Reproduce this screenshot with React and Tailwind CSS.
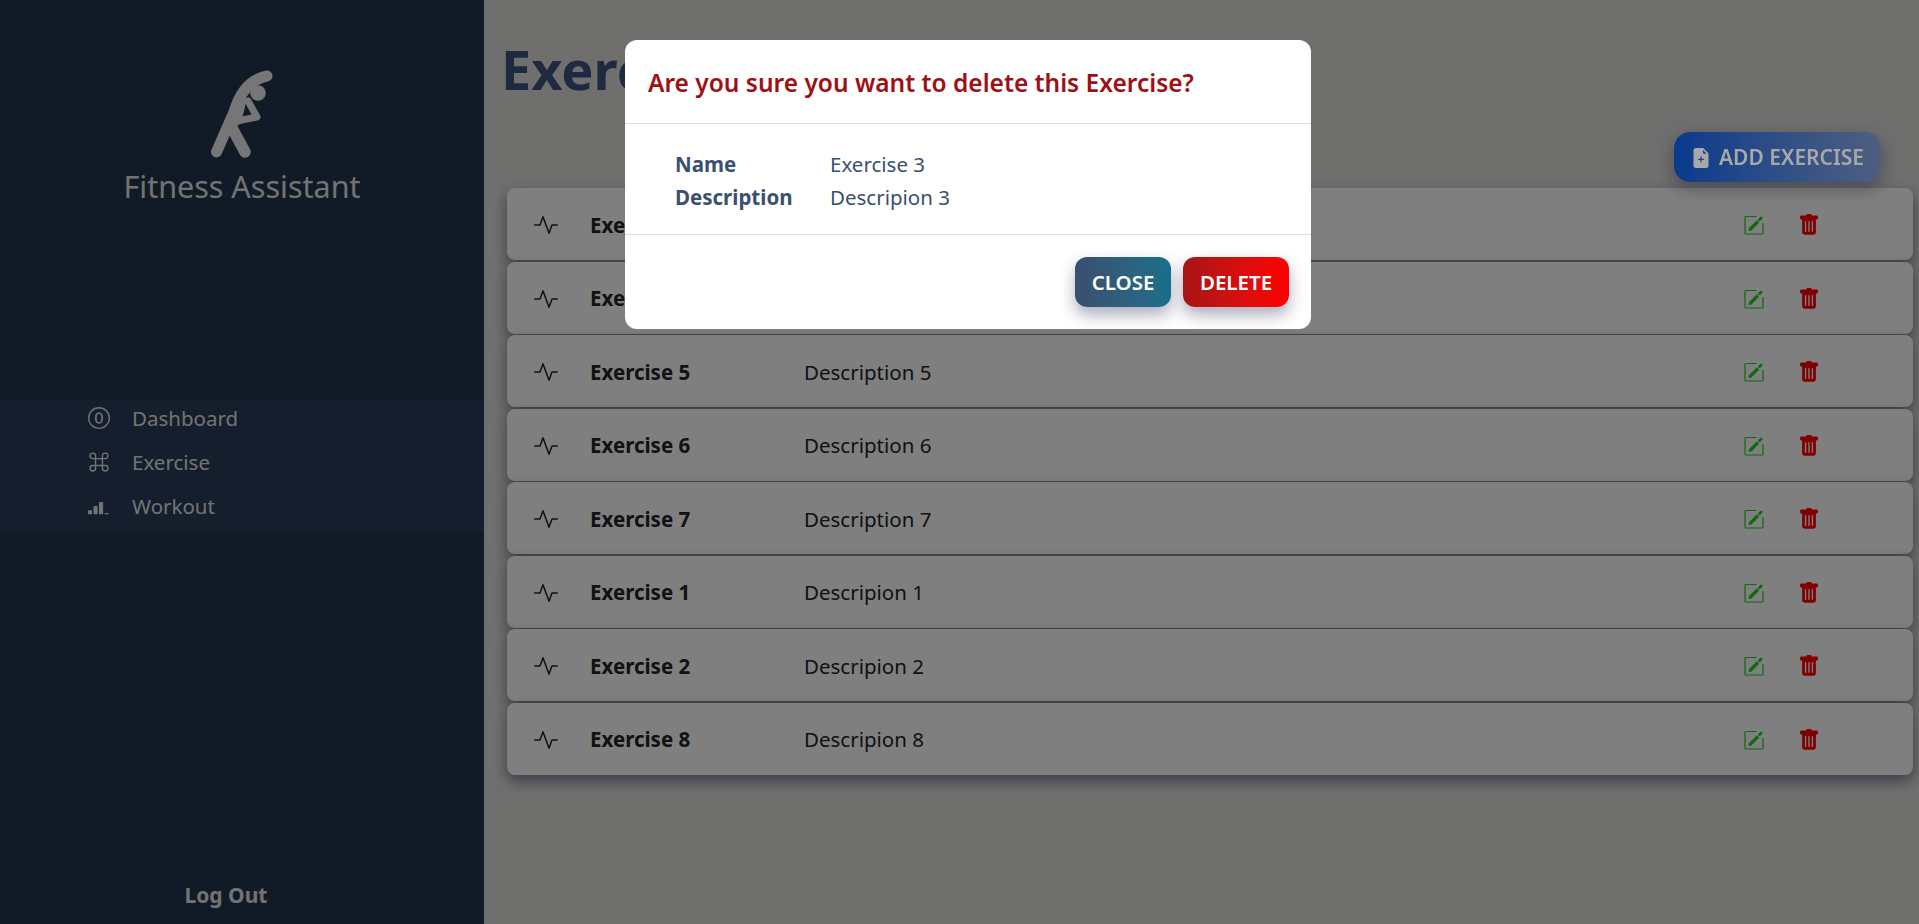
import React from "react";
import { Bs0Circle, BsCommand, BsReception3, BsActivity, BsTrashFill, BsFileEarmarkPlusFill } from "react-icons/bs";

const exercises = [
    { name: "Exercise 3", description: "Descripion 3" },
    { name: "Exercise 4", description: "Descripion 4" },
    { name: "Exercise 5", description: "Description 5" },
    { name: "Exercise 6", description: "Description 6" },
    { name: "Exercise 7", description: "Description 7" },
    { name: "Exercise 1", description: "Descripion 1" },
    { name: "Exercise 2", description: "Descripion 2" },
    { name: "Exercise 8", description: "Descripion 8" },
];

const navItems = [
    { label: "Dashboard", Icon: Bs0Circle },
    { label: "Exercise", Icon: BsCommand },
    { label: "Workout", Icon: BsReception3 },
];

function Logo() {
    return (
        <svg width="65" height="92" viewBox="0 0 65 92" fill="none" className="text-[#ececec]">
            <circle cx="48" cy="23" r="7.8" fill="currentColor" />
            <path d="M6.5 82 L24 42 C30 22 41 9 57 6" stroke="currentColor" strokeWidth="11" strokeLinecap="round" />
            <path d="M21 56 L35 82" stroke="currentColor" strokeWidth="11.5" strokeLinecap="round" />
            <path d="M38 31 L47 47 L27 51" stroke="currentColor" strokeWidth="7" strokeLinecap="round" strokeLinejoin="round" />
            <path d="M24 36 L37 28 L34 41 L31 53 L16 64 Z" fill="currentColor" />
        </svg>
    );
}

function EditIcon() {
    return (
        <svg width="20" height="20" viewBox="0 0 20 20" fill="none" className="shrink-0 text-[#1cd41c]">
            <path d="M12.5 1.5H2a1 1 0 0 0-1 1V18a1 1 0 0 0 1 1h16a1 1 0 0 0 1-1V8" stroke="currentColor" strokeWidth="1.2" />
            <path d="M6 14.5 L14 6.5" stroke="currentColor" strokeWidth="3.2" />
            <path d="M4.5 16 L5 12.9 L7.5 15.4 Z" fill="currentColor" />
            <path d="M15.5 4.8 L17.3 2.9" stroke="currentColor" strokeWidth="2.8" strokeLinecap="round" />
        </svg>
    );
}

function Sidebar() {
    return (
        <aside className="w-[484px] h-full shrink-0 bg-[#23344f] flex flex-col text-[#e6e6e6]">
            <div className="h-[400px] flex flex-col items-center pt-[70px]">
                <Logo />
                <div className="text-[30.5px] leading-[40px] mt-[4px]">Fitness Assistant</div>
            </div>
            <nav className="h-[132px] bg-[#283c5a] pl-[88px]">
                <div className="-mt-[4px]">
                    {navItems.map(({ label, Icon }) => (
                        <div key={label} className="h-[44px] flex items-center gap-[22px] text-[20.5px]">
                            <Icon size={22} />
                            <span>{label}</span>
                        </div>
                    ))}
                </div>
            </nav>
            <div className="flex-1 flex items-end justify-center pr-[32px] pb-[11px]">
                <span className="text-[21px] font-bold leading-[36px]">Log Out</span>
            </div>
        </aside>
    );
}

function ExerciseRow({ exercise }) {
    return (
        <div className="relative h-[72px] mb-[1.5px] pt-[2px] bg-white rounded-lg flex items-center shadow-[0_6px_14px_rgba(50,50,93,0.6)] text-[#212529] text-[20.5px]">
            <BsActivity size={24} className="ml-[27px] shrink-0" />
            <span className="ml-[32px] w-[214px] font-bold">{exercise.name}</span>
            <span className="flex-1">{exercise.description}</span>
            <EditIcon />
            <BsTrashFill size={22} className="ml-[34px] mr-[93px] text-[#ff0000] shrink-0" />
        </div>
    );
}

function DeleteModal() {
    return (
        <div className="fixed inset-0 z-10 bg-black/50">
            <div className="ml-[625px] mt-[40px] w-[686px] h-[289px] bg-white rounded-xl flex flex-col">
                <div className="h-[84px] border-b border-[#dee2e6] pl-[23px] pt-[4px] flex items-center">
                    <h2 className="text-[24.5px] font-semibold text-[#9e1015]">Are you sure you want to delete this Exercise?</h2>
                </div>
                <div className="h-[111px] border-b border-[#dee2e6] pl-[50px] pt-[24px] text-[20.5px] leading-[33px] text-[#3a506e]">
                    <div className="flex">
                        <span className="w-[155px] font-bold">Name</span>
                        <span>Exercise 3</span>
                    </div>
                    <div className="flex">
                        <span className="w-[155px] font-bold">Description</span>
                        <span>Descripion 3</span>
                    </div>
                </div>
                <div className="flex-1 flex justify-end items-start gap-[12px] pt-[22px] pr-[22px]">
                    <button className="w-[96px] h-[50px] rounded-xl text-white text-[20.5px] font-semibold bg-gradient-to-r from-[#3a4f6f] to-[#176f8c] shadow-[0_8px_16px_rgba(50,50,93,0.4)]">CLOSE</button>
                    <button className="w-[106px] h-[50px] rounded-xl text-white text-[20.5px] font-semibold bg-gradient-to-r from-[#a81414] to-[#ff0000] shadow-[0_8px_16px_rgba(50,50,93,0.4)]">DELETE</button>
                </div>
            </div>
        </div>
    );
}

export default function App() {
    return (
        <div className="flex h-screen overflow-hidden bg-[#dfdfdc] font-['Noto_Sans',sans-serif]">
            <Sidebar />
            <main className="flex-1 min-w-0 pl-[23px] pr-[6px]">
                <h1 className="text-[54px] leading-[72px] font-bold text-[#3b5580] -ml-[6px] mt-[33px]">Exercise</h1>
                <div className="flex justify-end mt-[27px] mb-[6px] pr-[32px]">
                    <button className="relative z-20 w-[207px] h-[50px] pt-[2px] rounded-2xl flex items-center justify-center gap-[8px] text-[#a8a8a8] text-[21px] font-semibold bg-gradient-to-r from-[#083a8c] to-[#4e5f7f] shadow-[0_6px_16px_rgba(40,40,60,0.5)]">
                        <BsFileEarmarkPlusFill size={20} />
                        ADD EXERCISE
                    </button>
                </div>
                {exercises.map((exercise) => (
                    <ExerciseRow key={exercise.name} exercise={exercise} />
                ))}
            </main>
            <DeleteModal />
        </div>
    );
}
